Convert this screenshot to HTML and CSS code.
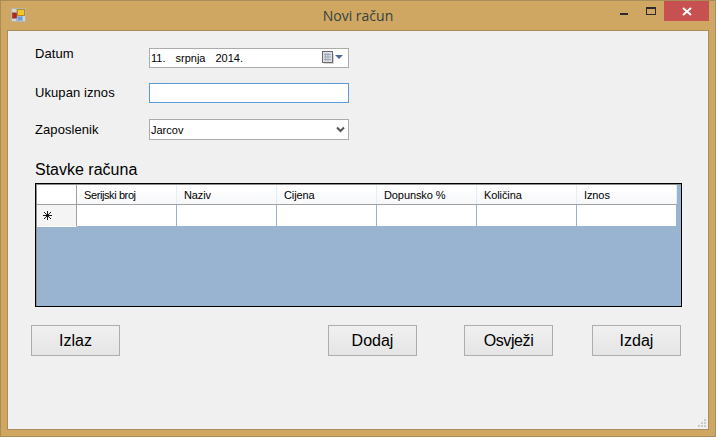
FILE: index.html
```html
<!DOCTYPE html>
<html lang="en">
<head>
    <meta charset="UTF-8">
    <title>Novi račun</title>
    <link rel="stylesheet" href="styles.css">
</head>
<body>

    <div class="window">
        <!-- Title bar -->
        <div class="titlebar">
            <svg class="app-icon" width="15" height="14" viewBox="0 0 15 14">
                <path d="M0.5 0.5H14.5V13.5H0.5Z M5.5 0.5V13.5 M0.5 4.5H5.5 M0.5 10.5H5.5" fill="#d9d4c8" stroke="#b5b5b0"/>
                <rect x="1.5" y="5" width="4" height="5" fill="#b3261e" stroke="#8a1d18" stroke-width="0.5"/>
                <rect x="6.5" y="1.5" width="7" height="6" fill="#f6c42e" stroke="#b98a1c"/>
                <rect x="6.5" y="8.5" width="5" height="4" fill="#6d9bd8" stroke="#8fb4e4"/>
            </svg>
            <div class="title">Novi račun</div>
            <div class="controls">
                <div class="ctl-min"></div>
                <div class="ctl-max"></div>
                <div class="ctl-close">
                    <svg width="10" height="9" viewBox="0 0 10 9">
                        <path d="M1 1 L9 8 M9 1 L1 8" stroke="#fff" stroke-width="2"/>
                    </svg>
                </div>
            </div>
        </div>

        <!-- Client area -->
        <div class="client">
            <div class="form-row row-date">
                <label class="field-label">Datum</label>
                <div class="field date-field">
                    <span class="date-part d1">11.</span><span class="date-part d2">srpnja</span><span class="date-part">2014.</span>
                    <span class="date-drop">
                        <svg width="22" height="14" viewBox="0 0 22 14">
                            <rect x="0.5" y="0.5" width="10" height="11" fill="#d8dde6" stroke="#6f6a68"/>
                            <path d="M2 3.5H9 M2 6H9 M2 8.5H9 M3.5 2V10 M6 2V10" stroke="#a4abb8"/>
                            <path d="M11.5 3V12.5H2" fill="none" stroke="#d4d4d4"/>
                            <path d="M13 4H21L17 8Z" fill="#4d6b94"/>
                        </svg>
                    </span>
                </div>
            </div>
            <div class="form-row row-total">
                <label class="field-label">Ukupan iznos</label>
                <div class="field text-field"></div>
            </div>
            <div class="form-row row-staff">
                <label class="field-label">Zaposlenik</label>
                <div class="field combo-field">
                    <span>Jarcov</span>
                    <svg width="9" height="7" viewBox="0 0 9 7">
                        <path d="M1 1.5 L4.5 5 L8 1.5" fill="none" stroke="#555" stroke-width="2"/>
                    </svg>
                </div>
            </div>

            <h2 class="section-title">Stavke računa</h2>

            <!-- Items grid -->
            <div class="grid">
                <div class="grid-row grid-head">
                    <div class="row-head"></div>
                    <div class="cell cell-serial">Serijski broj</div>
                    <div class="cell">Naziv</div>
                    <div class="cell">Cijena</div>
                    <div class="cell">Dopunsko %</div>
                    <div class="cell">Količina</div>
                    <div class="cell">Iznos</div>
                </div>
                <div class="grid-row grid-new">
                    <div class="row-head">
                        <svg width="9" height="9" viewBox="0 0 9 9">
                            <path d="M4.5 0V9 M0 4.5H9 M1 1L8 8 M8 1L1 8" stroke="#000" stroke-width="0.9"/>
                        </svg>
                    </div>
                    <div class="cell"></div>
                    <div class="cell"></div>
                    <div class="cell"></div>
                    <div class="cell"></div>
                    <div class="cell"></div>
                    <div class="cell"></div>
                </div>
            </div>

            <div class="buttons">
                <button class="btn btn-exit">Izlaz</button>
                <button class="btn btn-add">Dodaj</button>
                <button class="btn btn-refresh">Osvježi</button>
                <button class="btn btn-issue">Izdaj</button>
            </div>

            <svg class="grip" width="10" height="10" viewBox="0 0 10 10">
                <path d="M7 1h2v2H7z M4 4h2v2H4z M7 4h2v2H7z M1 7h2v2H1z M4 7h2v2H4z M7 7h2v2H7z" fill="#c9c9c9"/>
            </svg>
        </div>
    </div>

</body>
</html>
```

FILE: styles.css
```css
html, body {
    margin: 0;
    padding: 0;
}

body {
    width: 716px;
    height: 437px;
    overflow: hidden;
    font-family: "Liberation Sans", Arial, sans-serif;
}

.window {
    box-sizing: border-box;
    width: 716px;
    height: 437px;
    display: flex;
    flex-direction: column;
    background-color: #cfa762;
    border: 1px solid #a98c58;
}

/* title bar */
.titlebar {
    position: relative;
    height: 30px;
    flex: none;
}

.app-icon {
    position: absolute;
    left: 10px;
    top: 7px;
}

.title {
    text-align: center;
    font-family: "Open Sans", sans-serif;
    font-size: 14px;
    line-height: 30px;
    color: #34423f;
}

.controls {
    position: absolute;
    top: 0;
    right: 6px;
    display: flex;
    height: 20px;
}

.ctl-min {
    width: 8px;
    height: 2px;
    margin: 12px 18px 0 0;
    background-color: #2b2b2b;
}

.ctl-max {
    box-sizing: border-box;
    width: 10px;
    height: 8px;
    margin: 6px 8px 0 0;
    border: 1px solid #2b2b2b;
    border-top-width: 2px;
}

.ctl-close {
    width: 45px;
    height: 20px;
    display: flex;
    align-items: center;
    justify-content: center;
    background-color: #c75050;
}

/* client area */
.client {
    position: relative;
    flex: 1;
    margin: 0 7px 7px 7px;
    background-color: #f0f0f0;
    outline: 1px solid #a98c58;
    padding-top: 17px;
}

.form-row {
    display: flex;
    align-items: flex-start;
    padding-left: 27px;
}

.row-total {
    margin-top: 15px;
}

.row-staff {
    margin-top: 16px;
}

.field-label {
    width: 114px;
    flex: none;
    font-size: 13px;
    line-height: 15px;
    letter-spacing: 0.08px;
    color: #000;
}

.row-date .field-label {
    margin-top: -2px;
}

.row-total .field-label {
    margin-top: 2px;
}

.row-staff .field-label {
    margin-top: 3px;
}

.field {
    box-sizing: border-box;
    width: 200px;
    height: 20px;
    background-color: #fff;
    border: 1px solid #ababab;
    font-size: 11px;
    color: #000;
}

.date-field {
    display: flex;
    align-items: center;
    padding-left: 1px;
}

.date-part {
    margin-right: 10px;
}

.d1 {
    margin-right: 10px;
}

.date-drop {
    margin-left: auto;
    margin-right: 4px;
    display: flex;
}

.text-field {
    border-color: #5b9bdc;
}

.combo-field {
    height: 21px;
    display: flex;
    align-items: center;
    justify-content: space-between;
    padding: 0 3px 0 1px;
}

.section-title {
    margin: 21px 0 0 27px;
    font-size: 16px;
    font-weight: normal;
    line-height: 17px;
    color: #000;
}

/* items grid */
.grid {
    box-sizing: border-box;
    width: 647px;
    height: 124px;
    margin: 5px 0 0 27px;
    padding: 1px 0 0 1px;
    background-color: #99b4d1;
    border: 1px solid #000;
    box-shadow: inset 1px 1px 0 #8c8c8c;
}

.grid-row {
    display: flex;
}

.row-head {
    box-sizing: border-box;
    width: 40px;
    flex: none;
    display: flex;
    align-items: center;
    padding-left: 6px;
    background-color: #f4f4f4;
}

.cell {
    box-sizing: border-box;
    width: 100px;
    flex: none;
    font-size: 11px;
    letter-spacing: -0.1px;
    padding-left: 7px;
}

.cell-serial {
    letter-spacing: -0.4px;
}

.grid-head {
    box-sizing: border-box;
    width: 640px;
    height: 20px;
    background-color: #fbfbfb;
    border-bottom: 1px solid #a0a0a0;
}

.grid-head .row-head {
    background-color: #fff;
    border-right: 1px solid #a0a0a0;
}

.grid-head .cell {
    line-height: 20px;
    border-right: 1px solid #e3ecf9;
    background-image: linear-gradient(#fff, #f7f8fa);
}

.grid-new {
    height: 21px;
    align-items: flex-start;
}

.grid-new .row-head {
    height: 22px;
    border-right: 1px solid #a0a0a0;
    border-bottom: 1px solid #fff;
}

.grid-new .cell {
    height: 21px;
    background-color: #fff;
    border-right: 1px solid #99b4d1;
}

/* buttons */
.buttons {
    display: flex;
    margin: 18px 0 0 23px;
}

.btn {
    box-sizing: border-box;
    width: 89px;
    height: 31px;
    padding: 0;
    font-family: "Liberation Sans", Arial, sans-serif;
    font-size: 16px;
    color: #000;
    border: 1px solid #adadad;
    background-image: linear-gradient(#f0f0f0, #e5e5e5);
}

.btn-add {
    margin-left: 208px;
}

.btn-refresh {
    margin-left: 47px;
    letter-spacing: -0.4px;
}

.btn-issue {
    margin-left: 39px;
}

.grip {
    position: absolute;
    right: 1px;
    bottom: 1px;
}
```
